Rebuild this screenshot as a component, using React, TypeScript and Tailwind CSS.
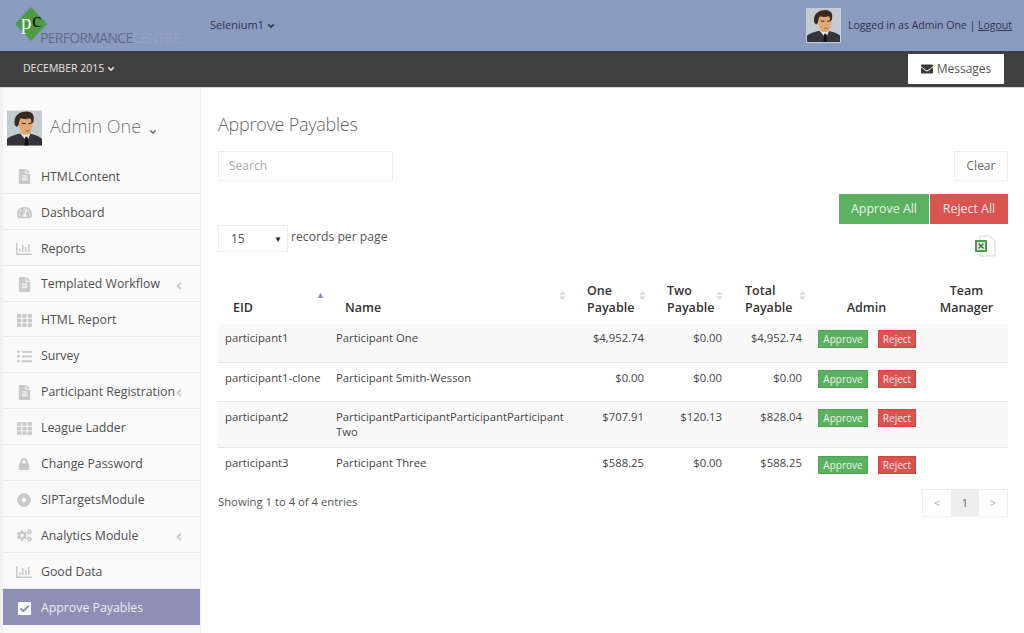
import React from 'react'
import {
  FaAngleDown,
  FaAngleLeft,
  FaCheckSquare,
  FaCogs,
  FaDotCircle,
  FaEnvelope,
  FaFileAlt,
  FaListUl,
  FaLock,
  FaRegChartBar,
  FaSort,
  FaTachometerAlt,
  FaTh,
} from 'react-icons/fa'

const navItems = [
  { label: 'HTMLContent', icon: FaFileAlt, size: 'text-[15px]' },
  { label: 'Dashboard', icon: FaTachometerAlt, size: 'text-[15px]' },
  { label: 'Reports', icon: FaRegChartBar, size: 'text-[16px]' },
  { label: 'Templated Workflow', icon: FaFileAlt, size: 'text-[15px]', more: true },
  { label: 'HTML Report', icon: FaTh, size: 'text-[15px]' },
  { label: 'Survey', icon: FaListUl, size: 'text-[15px]' },
  { label: 'Participant Registration', icon: FaFileAlt, size: 'text-[15px]', more: true },
  { label: 'League Ladder', icon: FaTh, size: 'text-[15px]' },
  { label: 'Change Password', icon: FaLock, size: 'text-[12px]' },
  { label: 'SIPTargetsModule', icon: FaDotCircle, size: 'text-[14px]' },
  { label: 'Analytics Module', icon: FaCogs, size: 'text-[15px]', more: true },
  { label: 'Good Data', icon: FaRegChartBar, size: 'text-[16px]' },
]

const rows = [
  { eid: 'participant1', name: 'Participant One', one: '$4,952.74', two: '$0.00', total: '$4,952.74', h: 'h-[38px]', bg: 'bg-[#f9f9f9]', textPt: 'pt-[6px]', btnPt: 'pt-[6px]' },
  { eid: 'participant1-clone', name: 'Participant Smith-Wesson', one: '$0.00', two: '$0.00', total: '$0.00', h: 'h-[39px]', bg: 'bg-white', textPt: 'pt-[7px]', btnPt: 'pt-[7px]' },
  { eid: 'participant2', name: 'ParticipantParticipantParticipantParticipant Two', one: '$707.91', two: '$120.13', total: '$828.04', h: 'h-[46px]', bg: 'bg-[#f9f9f9]', textPt: 'pt-[7px]', btnPt: 'pt-[7px]' },
  { eid: 'participant3', name: 'Participant Three', one: '$588.25', two: '$0.00', total: '$588.25', h: 'h-[38px]', bg: 'bg-white', textPt: 'pt-[7px]', btnPt: 'pt-[8px]' },
]

function Avatar({ className }: { className: string }) {
  return (
    <svg viewBox="0 0 36 36" className={className}>
      <rect width="36" height="36" fill="#c3ccce" />
      <path d="M0 36v-7c4-3 9-4 12-5h12c4 1 8 2 12 5v7z" fill="#33353a" />
      <path d="M14 24h10l-2 5-2-2-2 2z" fill="#e9e9e6" />
      <path d="M19 27h2l1 9h-4z" fill="#111" />
      <path d="M12 9c1-4 13-4 14 0 1 7-1 14-4 16h-5c-3-2-6-9-5-16z" fill="#e2a874" />
      <path d="M8 15C6 5 13 1 20 1c6 0 9 4 7 11l-2 2c0-3 0-5-1-6-4 1-7 1-10 0-1 2-2 4-2 7l-2 2z" fill="#3a2a1e" />
      <path d="M15 13l4 .5M22 13.500l3-.5" stroke="#2e2119" strokeWidth="1" />
      <path d="M19 21h4" stroke="#9a5a3c" strokeWidth="1" />
    </svg>
  )
}

function SortIcon() {
  return <FaSort className="inline-block text-[11px] text-[#dcdfe5]" />
}

function Header({ children, className }: { children: React.ReactNode; className?: string }) {
  return (
    <th className={`align-bottom pb-[8px] text-[12.5px] leading-[17px] font-semibold text-[#333] ${className ?? ''}`}>
      {children}
    </th>
  )
}

export default function App() {
  return (
    <div className="w-[1024px] h-[633px] overflow-hidden bg-white text-[12px] text-[#444] font-['Open_Sans',sans-serif]">
      <header className="h-[51px] bg-[#8a9bc0] flex items-center">
        <div className="relative w-[210px] h-[51px] shrink-0">
          <svg viewBox="0 0 32 34" className="absolute left-[15px] top-[7px] w-[32px] h-[34px]">
            <path d="M16 0l16 17-16 17L0 17z" fill="#4e9a47" />
            <text x="6" y="22" fontFamily="Liberation Serif, serif" fontSize="21" fill="#f2f5ee">p</text>
            <text x="17" y="20" fontFamily="Liberation Serif, serif" fontSize="21" fill="#111">c</text>
          </svg>
          <span className="absolute left-[40px] top-[29px] text-[14px] leading-[18px] tracking-[-0.7px] text-[#5f6c8c] whitespace-nowrap">
            PERFORMANCE<span className="text-[#94a4c4]">CENTRE</span>
          </span>
        </div>
        <div className="flex items-center gap-[2px] text-[11px] text-[#2c3550]">
          Selenium1 <FaAngleDown className="text-[10px]" />
        </div>
        <div className="ml-auto flex items-center pr-[12px]">
          <Avatar className="w-[35px] h-[35px] border border-[#c5cde0]" />
          <span className="ml-[7px] text-[10.5px] text-[#2c3550]">
            Logged in as Admin One | <span className="underline">Logout</span>
          </span>
        </div>
      </header>

      <div className="h-[37px] bg-[#404040] flex items-center justify-between pl-[23px] pr-[20px] border-b border-[#d8d8d8]">
        <div className="flex items-center gap-[2px] text-[10.5px] text-[#e4e4e4]">
          DECEMBER 2015 <FaAngleDown className="text-[10px]" />
        </div>
        <button className="w-[96px] h-[30px] bg-white flex items-center justify-center gap-[4px] text-[12px] text-[#555]">
          <FaEnvelope className="text-[12px] text-[#3a3a3a]" /> Messages
        </button>
      </div>

      <div className="flex h-[545px]">
        <aside className="w-[201px] shrink-0 bg-[#fafafa] border-r border-[#efefef] border-l-[3px] border-l-[#f1f1f1]">
          <div className="h-[70px] flex items-end pb-[12px] pl-[4px]">
            <Avatar className="w-[35px] h-[36px]" />
            <span className="ml-[8px] mb-[7px] text-[18px] leading-[26px] font-light text-[#777]">Admin One</span>
            <FaAngleDown className="ml-[7px] mb-[9px] text-[10px] text-[#777]" />
          </div>
          <nav>
            {navItems.map(item => {
              const Icon = item.icon
              return (
                <div key={item.label} className="relative h-[35.9px] pt-[3px] flex items-center border-b border-[#e9e9e9]">
                  <span className="w-[38px] shrink-0 flex justify-center pl-[4px]">
                    <Icon className={`${item.size} text-[#c9c9c9]`} />
                  </span>
                  <span className="text-[12.3px] text-[#4f4f4f] whitespace-nowrap">{item.label}</span>
                  {item.more && <FaAngleLeft className="absolute left-[170px] top-[14px] text-[12px] text-[#c8c8c8]" />}
                </div>
              )
            })}
            <div className="h-[36px] pt-[3px] flex items-center bg-[#8d8fb5] text-white">
              <span className="w-[38px] shrink-0 flex justify-center pl-[4px]">
                <FaCheckSquare className="text-[15px]" />
              </span>
              <span className="text-[12.3px] text-[#eeeef6]">Approve Payables</span>
            </div>
          </nav>
        </aside>

        <main className="flex-1 pl-[17px] pr-[16px]">
          <h1 className="mt-[23px] text-[18px] leading-[26px] tracking-[-0.25px] font-light text-[#666]">Approve Payables</h1>

          <div className="mt-[14px] flex justify-between">
            <div className="w-[175px] h-[30px] border border-[#eeeeee] flex items-center pl-[10px] text-[#aaa] text-[12px]">
              Search
            </div>
            <button className="w-[54px] h-[30px] border border-[#eeeeee] text-[12px] text-[#666]">Clear</button>
          </div>

          <div className="mt-[13px] flex justify-end">
            <button className="w-[90px] h-[30px] bg-[#5cb161] text-[12.4px] text-[#e8f5e8]">Approve All</button>
            <button className="ml-[1px] w-[78px] h-[30px] bg-[#d9534f] text-[12.4px] text-[#fbe7e6]">Reject All</button>
          </div>

          <div className="relative h-[30px]">
            <div className="absolute left-0 top-[1px] flex items-center">
              <div className="w-[70px] h-[27px] border border-[#eeeeee] flex items-center justify-between pl-[12px] pr-[5px] text-[12px] text-[#555]">
                15 <span className="text-[8px] text-[#222]">▼</span>
              </div>
              <span className="ml-[3px] -mt-[3px] text-[12.2px] text-[#555]">records per page</span>
            </div>
            <svg viewBox="0 0 22 22" className="absolute right-[12px] top-[11px] w-[22px] h-[22px]">
              <path d="M6 1h10l5 5v15H6z" fill="#fff" stroke="#d5d5d5" />
              <rect x="1" y="5" width="12" height="12" fill="#4f9a4d" />
              <rect x="3" y="7" width="8" height="8" fill="#dfeedd" />
              <path d="M4.500 8.500l5 5M9.500 8.500l-5 5" stroke="#2f7a30" strokeWidth="1.400" />
            </svg>
          </div>

          <table className="mt-[14px] w-[790px] table-fixed border-collapse">
            <colgroup>
              <col className="w-[112px]" />
              <col className="w-[240px]" />
              <col className="w-[80px]" />
              <col className="w-[75px]" />
              <col className="w-[83px]" />
              <col className="w-[117px]" />
              <col className="w-[83px]" />
            </colgroup>
            <thead>
              <tr className="h-[56px]">
                <Header className="relative text-left pl-[15px]">
                  EID
                  <span className="absolute right-[5px] top-[23px] text-[9px] leading-[8px] font-normal text-[#8d8fc0]">▲</span>
                </Header>
                <Header className="relative text-left pl-[15px]">
                  Name
                  <span className="absolute right-[2px] top-[18px]"><SortIcon /></span>
                </Header>
                <Header className="relative text-left pl-[17px]">
                  One<br />Payable
                  <span className="absolute right-[2px] top-[18px]"><SortIcon /></span>
                </Header>
                <Header className="relative text-left pl-[17px]">
                  Two<br />Payable
                  <span className="absolute right-[0px] top-[18px]"><SortIcon /></span>
                </Header>
                <Header className="relative text-left pl-[20px]">
                  Total<br />Payable
                  <span className="absolute right-[0px] top-[18px]"><SortIcon /></span>
                </Header>
                <Header className="text-center">Admin</Header>
                <Header className="text-center">Team<br />Manager</Header>
              </tr>
            </thead>
            <tbody>
              {rows.map(row => (
                <tr key={row.eid} className={`${row.h} ${row.bg} border-b border-[#e6e6e6] last:border-b-0`}>
                  <td className={`align-top ${row.textPt} pl-[7px] text-[11.3px] leading-[15px]`}>{row.eid}</td>
                  <td className={`align-top ${row.textPt} pl-[6px] text-[11.3px] leading-[15px]`}>{row.name}</td>
                  <td className={`align-top ${row.textPt} pr-[6px] text-right text-[11.3px] leading-[15px]`}>{row.one}</td>
                  <td className={`align-top ${row.textPt} pr-[3px] text-right text-[11.3px] leading-[15px]`}>{row.two}</td>
                  <td className={`align-top ${row.textPt} pr-[6px] text-right text-[11.3px] leading-[15px]`}>{row.total}</td>
                  <td className={`align-top ${row.btnPt}`}>
                    <div className="flex pl-[10px] gap-[10px]">
                      <span className="w-[50px] h-[18px] bg-[#5cb161] border border-[#4ea653] text-[10px] leading-[16px] text-center text-[#e8f5e8]">Approve</span>
                      <span className="w-[38px] h-[18px] bg-[#d9534f] border border-[#d0443f] text-[10px] leading-[16px] text-center text-[#fbe7e6]">Reject</span>
                    </div>
                  </td>
                  <td />
                </tr>
              ))}
            </tbody>
          </table>

          <div className="mt-[4px] flex items-center justify-between">
            <span className="-mt-[2px] text-[11.3px] text-[#555]">Showing 1 to 4 of 4 entries</span>
            <div className="flex h-[28px] border border-[#eeeeee] text-[11px] text-[#aaa]">
              <span className="w-[28px] flex items-center justify-center">&lt;</span>
              <span className="w-[28px] flex items-center justify-center bg-[#eeeeee] text-[#666]">1</span>
              <span className="w-[28px] flex items-center justify-center">&gt;</span>
            </div>
          </div>
        </main>
      </div>
    </div>
  )
}
